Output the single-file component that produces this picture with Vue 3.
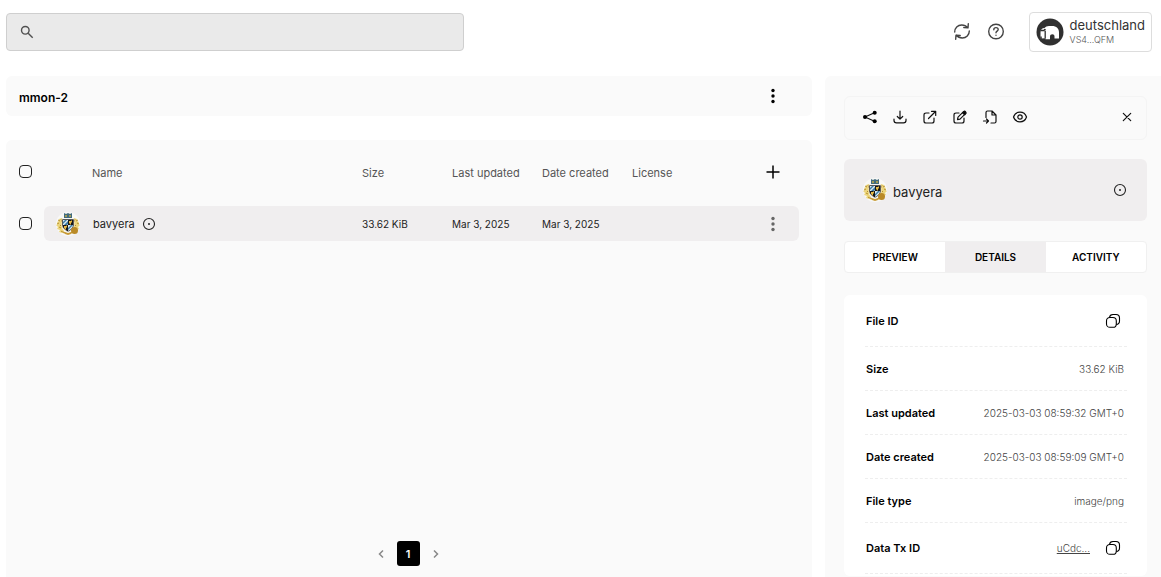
<script setup>
import { ref } from 'vue'

const query = ref('')
const allSelected = ref(false)
const rowSelected = ref(false)
const activeTab = ref('Details')
const tabs = ['Preview', 'Details', 'Activity']
const details = [
  { label: 'File ID', copy: true },
  { label: 'Size', value: '33.62 KiB' },
  { label: 'Last updated', value: '2025-03-03 08:59:32 GMT+0' },
  { label: 'Date created', value: '2025-03-03 08:59:09 GMT+0' },
  { label: 'File type', value: 'image/png' },
  { label: 'Data Tx ID', link: 'uCdc...', copy: true },
]
</script>

<template>
  <svg class="defs" aria-hidden="true">
    <symbol id="crest" viewBox="0 0 24 24">
      <circle cx="12" cy="12" r="12" fill="#f8f8f6" />
      <path d="M3 7l3-1 2 3-2 2 2 2-2 3 2 3-2 2-3-1 1-2-3-1 1-2-2-2 2-1-1-2 2-1zM21 7l-3-1-2 3 2 2-2 2 2 3-2 3 2 2 3-1-1-2 3-1-1-2 2-2-2-1 1-2-2-1z" fill="#ecd57c" />
      <path d="M2 8l2 1M1 12l2-1M3 15l2 1M22 8l-2 1M23 12l-2-1M5 19l3 2M19 7l-1 3M5 7l1 3M4 13l1 1M20 13l-1 1" stroke="#b7902d" stroke-width="1" />
      <path d="M8 1l2 1 2-1 2 1 2-1v5H8z" fill="#426a7c" />
      <path d="M9 3h2v2H9zM13 3h2v2h-2z" fill="#9f9a55" />
      <path d="M6 7h12v6c0 3-3 5-6 7-3-2-6-4-6-7z" fill="#161719" stroke="#f5f4ef" stroke-width=".6" />
      <path d="M7 8h5v5H7zM12 13h5c0 3-2 4-5 6z" fill="#dce9f0" />
      <path d="M7 10l2-2h2l-4 4zM8 13l4-4v3l-1 1zM12 16l3-3h2l-5 5z" fill="#397ba5" />
      <path d="M13 9h2l1-1v2l-1 1v2l-2-2zM8 14h2l1-1v2l-1 1v2l-2-2z" fill="#e6b944" />
      <path d="M6 19l3 1 3 1 3-1 2 0-2 2-3 1-3-1z" fill="#c79934" />
      <circle cx="18.500" cy="18.500" r="3.500" fill="#ba8a27" />
    </symbol>
    <symbol id="scope" viewBox="0 0 14 14">
      <circle cx="7" cy="7" r="5.5" fill="none" stroke="currentColor" stroke-width="1.1" />
      <circle cx="7" cy="7" r="1" fill="currentColor" />
    </symbol>
    <symbol id="kebab" viewBox="0 0 4 16">
      <circle cx="2" cy="2.5" r="1.7" fill="currentColor" />
      <circle cx="2" cy="8" r="1.7" fill="currentColor" />
      <circle cx="2" cy="13.5" r="1.7" fill="currentColor" />
    </symbol>
  </svg>

  <div class="page">
    <header class="topbar">
      <label class="search">
        <svg width="14" height="14" viewBox="0 0 14 14" fill="none" stroke="#505050" stroke-width="1.4">
          <circle cx="5.3" cy="5.3" r="3.8" /><path d="M8.2 8.2l4.5 4.5" />
        </svg>
        <input v-model="query" type="search" aria-label="Search" />
      </label>
      <div class="account">
        <button class="icon" aria-label="Refresh">
          <svg width="18" height="20" viewBox="0 0 18 20" fill="none" stroke="#444" stroke-width="1.4" stroke-linecap="round" stroke-linejoin="round">
            <path d="M1.700 10c0-4 3-7 7-7 2.500 0 4.600 1 6 2.700M15.300 1.700l-.3 4.200-4.200-.4M16.300 9c0 4-3 7-7 7-2.500 0-4.600-1-6-2.700M2.700 17.300l.3-4.200 4.200.4" />
          </svg>
        </button>
        <button class="icon" aria-label="Help">
          <svg width="18" height="20" viewBox="0 0 18 20" fill="none" stroke="#444" stroke-width="1.400" stroke-linecap="round">
            <circle cx="9" cy="9.500" r="7.300" />
            <path d="M6.800 7.700c0-1.300 1-2.100 2.200-2.100s2.200.8 2.200 2c0 1.500-2.200 1.600-2.200 3.200" /><path d="M9 13.200v.1" />
          </svg>
        </button>
        <button class="profile">
          <svg width="28" height="28" viewBox="0 0 28 28">
            <circle cx="14" cy="14" r="13.500" fill="#303030" />
            <path d="M4.500 20.500v-6C4.500 11.500 6 10 8.500 10c1-1.300 2.500-2 4.500-2h3c4.500 0 7 2.500 7 6.500v6h-4.500v-2c0-1.500-.9-2.300-2.200-2.300s-2.300.8-2.300 2.300v2.700H9.500v-1z" fill="#fff" />
            <path d="M4.500 12.500h4M9.200 13v7.500" stroke="#303030" stroke-width="1.300" />
            <circle cx="8.800" cy="11.800" r="1" fill="#303030" />
            <path d="M5 18.500v3" stroke="#303030" stroke-width="1.500" />
          </svg>
          <span class="who"><b>deutschland</b><small>VS4...QFM</small></span>
        </button>
      </div>
    </header>

    <div class="body">
      <main class="main">
        <section class="drive">
          <h1>mmon-2</h1>
          <button class="icon" aria-label="Drive menu"><svg width="4" height="16"><use href="#kebab" /></svg></button>
        </section>
        <section class="files">
          <table>
            <thead>
              <tr>
                <th class="check"><input v-model="allSelected" type="checkbox" aria-label="Select all" /></th>
                <th class="name">Name</th>
                <th class="col">Size</th>
                <th class="col">Last updated</th>
                <th class="col">Date created</th>
                <th>License</th>
                <th class="action">
                  <button class="icon" aria-label="Add column">
                    <svg width="14" height="14" viewBox="0 0 14 14" stroke="#000" stroke-width="1.500"><path d="M7 .5v13M.5 7h13" /></svg>
                  </button>
                </th>
              </tr>
            </thead>
            <tbody>
              <tr>
                <td class="check"><input v-model="rowSelected" type="checkbox" aria-label="Select bavyera" /></td>
                <td class="name">
                  <div class="file">
                    <svg width="24" height="24"><use href="#crest" /></svg>
                    <span>bavyera</span>
                    <svg width="14" height="14"><use href="#scope" /></svg>
                  </div>
                </td>
                <td>33.62 KiB</td>
                <td>Mar 3, 2025</td>
                <td>Mar 3, 2025</td>
                <td></td>
                <td class="action">
                  <button class="icon dim" aria-label="File menu"><svg width="4" height="16"><use href="#kebab" /></svg></button>
                </td>
              </tr>
            </tbody>
          </table>
          <nav class="pages" aria-label="Pages">
            <button class="arrow" aria-label="Previous page"><svg width="8" height="10" viewBox="0 0 8 10"><path d="M6 1.500L2.500 5 6 8.500" /></svg></button>
            <button class="current" aria-current="page">1</button>
            <button class="arrow" aria-label="Next page"><svg width="8" height="10" viewBox="0 0 8 10"><path d="M2 1.500L5.500 5 2 8.500" /></svg></button>
          </nav>
        </section>
      </main>

      <aside class="side">
        <div class="tools">
          <button class="icon" aria-label="Share">
            <svg viewBox="0 0 16 16"><path d="M13 3.500L3 8l10 4.500" /><g fill="#000" stroke="none"><circle cx="3" cy="8" r="2" /><circle cx="12.700" cy="3.700" r="2" /><circle cx="12.700" cy="12.300" r="2" /></g></svg>
          </button>
          <button class="icon" aria-label="Download">
            <svg viewBox="0 0 16 16"><path d="M8 2v8M5.300 7.500L8 10.200l2.700-2.700M2 10v1.500c0 1.500 1 2.300 2.500 2.300h7c1.500 0 2.500-.8 2.500-2.300V10" /></svg>
          </button>
          <button class="icon" aria-label="Open">
            <svg viewBox="0 0 16 16"><path d="M7 4H4C2.700 4 2 4.700 2 6v6c0 1.300.7 2 2 2h6c1.300 0 2-.7 2-2V9M6.500 9.500L13.500 2.500M9.500 2.300h4.200v4.200" /></svg>
          </button>
          <button class="icon" aria-label="Rename">
            <svg viewBox="0 0 16 16"><path d="M7 4H4C2.700 4 2 4.700 2 6v6c0 1.300.7 2 2 2h6c1.300 0 2-.7 2-2V9M6 8.200l5.800-5.800c1.200-.8 2.700.6 1.900 1.900L8 10.100l-2.500.6z" /><path d="M10.500 3.700l2.200 2.100 1.300-1.700-1.700-1.700z" fill="#000" /></svg>
          </button>
          <button class="icon" aria-label="Move">
            <svg viewBox="0 0 16 16"><path d="M4 8.500v-5C4 2.500 4.600 2 5.500 2H10l4 4v6.500c0 1-.6 1.500-1.500 1.500H9M10 2v4h4M1.500 12h5M4.500 10l2 2-2 2" /></svg>
          </button>
          <button class="icon" aria-label="Preview file">
            <svg viewBox="0 0 16 16"><path d="M1.500 8c1-3 3.500-4.800 6.500-4.800S13.500 5 14.500 8c-1 3-3.500 4.800-6.500 4.800S2.500 11 1.500 8z" /><circle cx="8" cy="8" r="2.200" /></svg>
          </button>
          <button class="icon close" aria-label="Close">
            <svg viewBox="0 0 16 16"><path d="M4.300 4.300l7.400 7.400M11.700 4.300l-7.400 7.400" /></svg>
          </button>
        </div>

        <div class="selected">
          <svg width="24" height="24"><use href="#crest" /></svg>
          <h2>bavyera</h2>
          <svg class="mark" width="14" height="14"><use href="#scope" /></svg>
        </div>

        <div class="tabs" role="tablist">
          <button v-for="tab in tabs" :key="tab" role="tab" :aria-selected="tab === activeTab" :class="{ active: tab === activeTab }" @click="activeTab = tab">{{ tab }}</button>
        </div>

        <dl class="details">
          <div v-for="item in details" :key="item.label" :class="{ tall: item.copy }">
            <dt>{{ item.label }}</dt>
            <dd>
              <template v-if="item.value">{{ item.value }}</template>
              <a v-if="item.link" href="#">{{ item.link }}</a>
              <button v-if="item.copy" class="icon" :aria-label="'Copy ' + item.label">
                <svg width="16" height="16" viewBox="0 0 16 16" fill="none" stroke="#000" stroke-width="1.100">
                  <rect x="1.500" y="4.500" width="9.800" height="9.800" rx="3.400" />
                  <path d="M4.500 4.500C4.700 2.500 6 1.500 8 1.500h3c2.300 0 3.500 1.200 3.500 3.500v3c0 2-1.200 3.300-3.200 3.500" />
                </svg>
              </button>
            </dd>
          </div>
        </dl>
      </aside>
    </div>
  </div>
</template>

<style>
body {
  background: #fff;
}
</style>

<style scoped>
* {
  box-sizing: border-box;
}
.defs {
  position: absolute;
  width: 0;
  height: 0;
}
.page {
  min-height: 100vh;
  display: flex;
  flex-direction: column;
  padding-left: 6px;
  font-family: Inter, "Liberation Sans", sans-serif;
  font-size: 11px;
  line-height: 16px;
  color: #222;
}
svg {
  display: block;
  flex: none;
}
button {
  font: inherit;
  color: inherit;
  border: 0;
  padding: 0;
  background: none;
  cursor: pointer;
}
.icon {
  display: inline-flex;
  align-items: center;
  justify-content: center;
}
.topbar {
  display: flex;
  align-items: flex-start;
  justify-content: space-between;
  padding: 12px 9px 24px 0;
}
.search {
  display: flex;
  align-items: center;
  gap: 12px;
  width: 40%;
  height: 38px;
  margin-top: 1px;
  padding: 0 13px;
  background: #eaeaea;
  border: 1px solid #cfcfcf;
  border-radius: 4px;
}
.search input {
  flex: 1;
  min-width: 0;
  border: 0;
  outline: 0;
  background: none;
  font: inherit;
}
.account {
  display: flex;
  align-items: center;
  gap: 16px;
}
.profile {
  display: flex;
  align-items: center;
  gap: 6px;
  height: 40px;
  margin-left: 8px;
  padding: 0 6px;
  border: 1px solid #ddd;
  border-radius: 4px;
  text-align: left;
}
.who b,
.who small {
  display: block;
}
.who b {
  font-size: 13px;
  font-weight: 400;
  color: #333;
}
.who small {
  font-size: 9px;
  line-height: 14px;
  font-weight: 300;
  color: #555;
}
.body {
  flex: 1;
  display: flex;
  gap: 13px;
}
.main {
  flex: 1;
  min-width: 0;
  display: flex;
  flex-direction: column;
  gap: 24px;
}
.drive {
  display: flex;
  align-items: center;
  justify-content: space-between;
  height: 40px;
  padding: 0 37px 0 13px;
  background: #fafafa;
  border-radius: 6px;
  color: #000;
}
h1 {
  margin: 4px 0 0;
  font-size: 12px;
  font-weight: 600;
}
.files {
  flex: 1;
  display: flex;
  flex-direction: column;
  justify-content: space-between;
  padding: 0 13px 11px 0;
  background: #fafafa;
  border-radius: 6px 6px 0 0;
}
table {
  width: 100%;
  table-layout: fixed;
  border-spacing: 0;
}
th,
td {
  padding: 0 0 0 6px;
  text-align: left;
  font-weight: 400;
}
th {
  height: 66px;
  color: #555;
}
td {
  height: 35px;
  background: #f0eeef;
  font-size: 10px;
}
th.name {
  padding-left: 48px;
}
td.name {
  padding-left: 12px;
  border-radius: 6px 0 0 6px;
  font-size: 11px;
}
.name {
  width: 312px;
}
.col {
  width: 90px;
}
.check {
  width: 38px;
  padding-left: 13px;
  background: none;
}
.action {
  width: 52px;
  padding: 0;
  text-align: center;
}
th.check,
th.action {
  padding-bottom: 3px;
}
td.action {
  border-radius: 0 6px 6px 0;
}
.action .icon {
  display: flex;
  margin: 0 auto;
}
.dim {
  color: #666;
}
input[type="checkbox"] {
  appearance: none;
  display: block;
  width: 13px;
  height: 13px;
  margin: 0;
  border: 1px solid #222;
  border-radius: 4px;
}
input[type="checkbox"]:checked {
  background: #222;
}
.file {
  display: flex;
  align-items: center;
}
.file span {
  margin: 0 7px 0 13px;
}
.pages {
  display: flex;
  justify-content: center;
  align-items: center;
  gap: 12px;
  padding-left: 11px;
}
.arrow svg {
  fill: none;
  stroke: #888;
  stroke-width: 1.5;
}
.current {
  width: 23px;
  height: 25px;
  border-radius: 3px;
  background: #000;
  color: #fff;
  font-weight: 600;
}
.side {
  width: 336px;
  padding: 20px 14px 0 19px;
  background: #fafafa;
  border-radius: 6px 0 0 0;
}
.tools {
  display: flex;
  align-items: center;
  gap: 14px;
  height: 44px;
  padding: 0 11px 2px 17px;
  border: 1px solid #f4f4f4;
  border-radius: 6px;
}
.tools svg {
  width: 16px;
  height: 16px;
  fill: none;
  stroke: #111;
  stroke-width: 1.2;
  stroke-linecap: round;
  stroke-linejoin: round;
}
.close {
  margin-left: auto;
}
.selected {
  display: flex;
  align-items: center;
  gap: 6px;
  height: 62px;
  margin-top: 19px;
  padding: 0 20px 0 19px;
  background: #f0eeef;
  border-radius: 6px;
}
h2 {
  margin: 3px 0 0;
  font-size: 13px;
  font-weight: 400;
}
.mark {
  margin-left: auto;
}
.tabs {
  display: flex;
  height: 32px;
  margin-top: 20px;
  border: 1px solid #f0f0f0;
  border-radius: 4px;
  overflow: hidden;
  background: #fff;
}
.tabs button {
  flex: 1;
  font-size: 10px;
  font-weight: 600;
  color: #000;
  text-transform: uppercase;
}
.tabs .active {
  background: #f0eeef;
}
.details {
  margin: 22px 0 0;
  padding: 1px 20px 2px 21px;
  background: #fff;
  border-radius: 6px;
}
.details div {
  display: flex;
  align-items: center;
  justify-content: space-between;
  height: 44px;
  padding: 0 3px 0 1px;
  border-bottom: 1px dashed #eee;
}
.details .tall {
  height: 51px;
  padding-right: 6px;
}
dt {
  font-weight: 600;
  color: #000;
}
dd {
  display: flex;
  align-items: center;
  gap: 15px;
  margin: 0;
  font-size: 10px;
  font-weight: 300;
  color: #444;
}
a {
  color: inherit;
}
</style>
